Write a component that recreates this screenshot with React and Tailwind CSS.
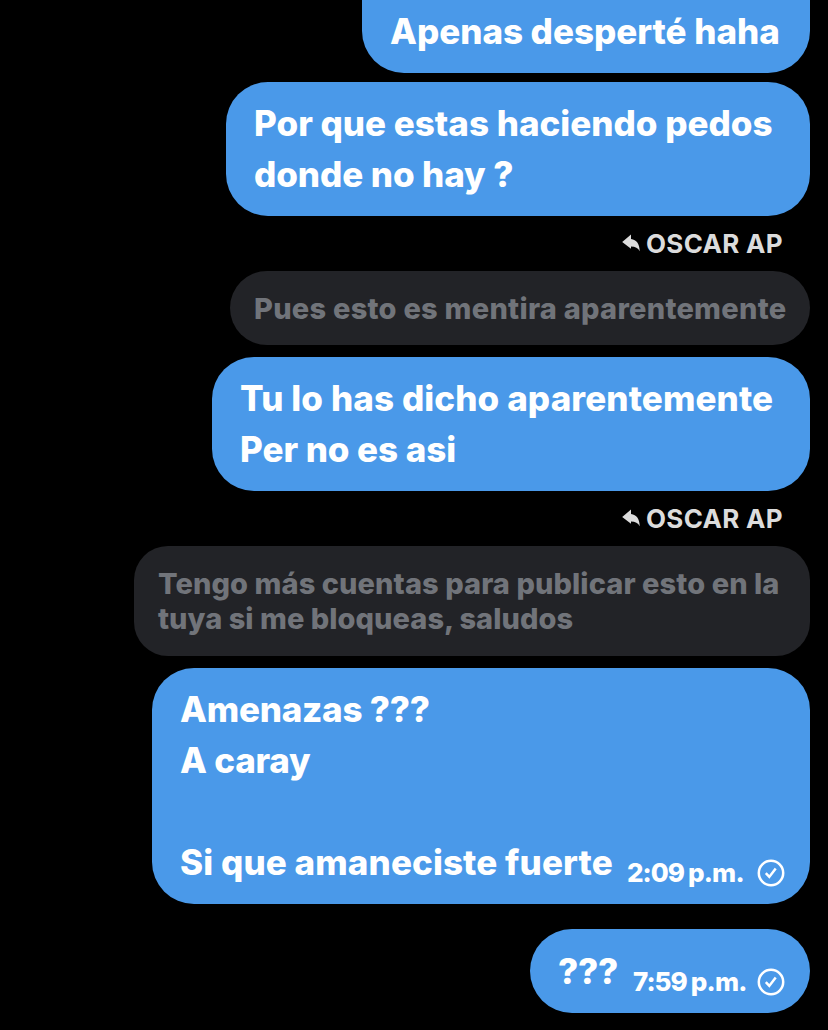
const thread = [
  {
    id: 1,
    box: 'w-[448px] h-[73px] rounded-b-[42px]',
    lines: [{ text: 'Apenas desperté haha', cls: 'tracking-[-0.03px]' }],
  },
  {
    id: 2,
    box: 'w-[584px] h-[134px] mt-[9px] rounded-[42px]',
    lines: [
      { text: 'Por que estas haciendo pedos', cls: 'tracking-normal' },
      { text: 'donde no hay ?', cls: 'tracking-[-0.08px]' },
    ],
  },
  {
    id: 3,
    reply: {
      author: 'OSCAR AP',
      box: 'w-[580px] h-[74px] rounded-[37px]',
      lines: [{ text: 'Pues esto es mentira aparentemente', cls: 'tracking-[0.26px]' }],
    },
    box: 'w-[598px] h-[134px] mt-3 rounded-[42px]',
    lines: [
      { text: 'Tu lo has dicho aparentemente', cls: 'tracking-[0.11px]' },
      { text: 'Per no es asi', cls: 'tracking-[-0.05px]' },
    ],
  },
  {
    id: 4,
    reply: {
      author: 'OSCAR AP',
      box: 'w-[676px] h-[110px] rounded-[34px]',
      lines: [
        { text: 'Tengo más cuentas para publicar esto en la', cls: 'tracking-[0.08px]' },
        { text: 'tuya si me bloqueas, saludos', cls: 'tracking-[0.04px]' },
      ],
    },
    box: 'w-[658px] h-[236px] mt-3 rounded-[42px]',
    lines: [
      { text: 'Amenazas ???', cls: 'tracking-[-0.25px]' },
      { text: 'A caray', cls: 'tracking-[-0.2px]' },
      { text: '', cls: '' },
      { text: 'Si que amaneciste fuerte', cls: 'tracking-[0.1px]' },
    ],
    hour: '2:09',
    hourBox: 'w-[118px]',
  },
  {
    id: 5,
    box: 'w-[280px] h-[84px] mt-[25px] rounded-[42px]',
    lines: [{ text: '???', cls: 'tracking-[-0.3px]' }],
    hour: '7:59',
    hourBox: 'w-[112px]',
  },
]

function ReplyIcon() {
  return (
    <svg className="w-[18px] h-[18px] mr-[6px] mb-[2px] shrink-0" viewBox="0 0 18 18" fill="#dcdcdc">
      <path d="M9 0.5v4.5c5.6.8 8.5 4.6 8.7 12.2-1.7-3-4.3-4.6-8.700-4.600v2.200L0.200 8z" />
    </svg>
  )
}

function SentIcon() {
  return (
    <svg className="w-7 h-7 shrink-0" viewBox="0 0 28 28" fill="none" stroke="white">
      <circle cx="14" cy="14" r="12.2" strokeWidth="2.5" />
      <path d="M8.8 14.2l3.5 3.7 6.4-8.500" strokeWidth="2.5" />
    </svg>
  )
}

function Quote({ author, box, lines }) {
  return (
    <>
      <div className="h-[55px] pr-[27px] flex items-center text-[#dcdcdc] text-[26px] font-bold">
        <ReplyIcon />
        <span className="w-[137px] whitespace-nowrap tracking-[0.3px]">{author}</span>
      </div>
      <div className={`${box} bg-[#222327] px-6 flex flex-col justify-center text-[#71747a] text-[29px] leading-[35px] font-extrabold`}>
        {lines.map((l, i) => (
          <div key={i} className={`whitespace-nowrap ${l.cls}`}>{l.text}</div>
        ))}
      </div>
    </>
  )
}

function Bubble({ box, lines, hour, hourBox }) {
  return (
    <div className={`${box} bg-[#4a99e9] pl-7 pr-[25px] pb-4 flex items-end justify-between text-white font-extrabold`}>
      <div className="text-[35px] leading-[51px]">
        {lines.map((l, i) => (
          <div key={i} className={`h-[51px] whitespace-nowrap ${l.cls}`}>{l.text}</div>
        ))}
      </div>
      {hour && (
        <div className="h-[31px] flex items-center">
          <div className={`${hourBox} mr-3 flex gap-1 text-[26px] whitespace-nowrap`}>
            <span className="tracking-[-1px]">{hour}</span>
            <span className="tracking-[-0.8px]">p.m.</span>
          </div>
          <SentIcon />
        </div>
      )}
    </div>
  )
}

export default function App() {
  return (
    <div className="w-[828px] h-[1030px] overflow-hidden bg-black pr-[18px] flex flex-col items-end font-['Inter',sans-serif]">
      {thread.map(m => (
        <div key={m.id} className="flex flex-col items-end">
          {m.reply && <Quote {...m.reply} />}
          <Bubble box={m.box} lines={m.lines} hour={m.hour} hourBox={m.hourBox} />
        </div>
      ))}
    </div>
  )
}
